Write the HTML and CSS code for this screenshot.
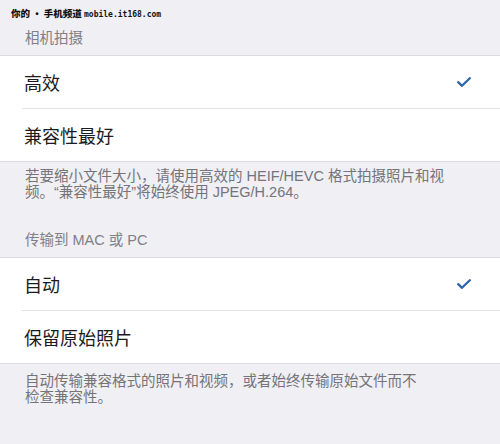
FILE: index.html
```html
<!DOCTYPE html>
<html lang="zh-CN">
<head>
    <meta charset="UTF-8">
    <meta name="viewport" content="width=device-width, initial-scale=1.0">
    <title>相机格式</title>
    <link rel="stylesheet" href="styles.css">
</head>
<body>
    <div class="watermark">你的 · 手机频道 <span class="watermark-url">mobile.it168.com</span></div>

    <main class="settings">
        <section class="section">
            <div class="section-header">相机拍摄</div>
            <div class="group">
                <div class="row">
                    <div class="row-inner">
                        <span class="row-title">高效</span>
                        <svg class="check" width="14" height="10" viewBox="0 0 14 10">
                            <polyline points="1.2,5.2 5,8.8 12.8,1.2" />
                        </svg>
                    </div>
                </div>
                <div class="row">
                    <div class="row-inner">
                        <span class="row-title">兼容性最好</span>
                    </div>
                </div>
            </div>
            <p class="section-footer">若要缩小文件大小，请使用高效的 HEIF/HEVC 格式拍摄照片和视<br>频。“兼容性最好”将始终使用 JPEG/H.264。</p>
        </section>

        <section class="section">
            <div class="section-header">传输到 MAC 或 PC</div>
            <div class="group">
                <div class="row">
                    <div class="row-inner">
                        <span class="row-title">自动</span>
                        <svg class="check" width="14" height="10" viewBox="0 0 14 10">
                            <polyline points="1.2,5.2 5,8.8 12.8,1.2" />
                        </svg>
                    </div>
                </div>
                <div class="row">
                    <div class="row-inner">
                        <span class="row-title">保留原始照片</span>
                    </div>
                </div>
            </div>
            <p class="section-footer">自动传输兼容格式的照片和视频，或者始终传输原始文件而不<br>检查兼容性。</p>
        </section>
    </main>
</body>
</html>
```

FILE: styles.css
```css
* {
    margin: 0;
    padding: 0;
    box-sizing: border-box;
}

body {
    font-family: "Liberation Sans", "Noto Sans CJK SC", sans-serif;
    background-color: #efeff4;
    color: #1c1c1e;
    width: 500px;
    height: 444px;
    overflow: hidden;
    position: relative;
}

/* watermark over the photo */
.watermark {
    position: absolute;
    top: 7px;
    left: 11px;
    font-family: "Noto Sans CJK SC", sans-serif;
    font-size: 9.5px;
    font-weight: 900;
    color: #111111;
    line-height: 12px;
    white-space: nowrap;
}

.watermark-url {
    font-family: "DejaVu Sans Mono", monospace;
    font-size: 8px;
}

.section-header {
    padding: 30px 25px 8px;
    font-size: 14.5px;
    line-height: 17px;
    color: #808085;
}

.section + .section .section-header {
    padding-top: 32px;
}

.group {
    background-color: #ffffff;
    border-top: 1px solid #dcdce0;
    border-bottom: 1px solid #dcdce0;
}

.row {
    padding-left: 22px;
}

.row-inner {
    height: 52px;
    display: flex;
    align-items: center;
    justify-content: space-between;
    padding-left: 2px;
    padding-right: 28px;
}

.row:not(:last-child) .row-inner {
    height: 53px;
    border-bottom: 1px solid #e2e2e6;
}

.row-title {
    font-size: 18px;
}

.check {
    margin-right: 1px;
}

.check polyline {
    fill: none;
    stroke: #2d66a8;
    stroke-width: 2.3;
    stroke-linecap: round;
    stroke-linejoin: round;
}

.section-footer {
    padding: 6px 25px 0;
    font-size: 14.5px;
    line-height: 16px;
    color: #747479;
}

.section + .section .section-footer {
    padding-top: 9px;
}
```
